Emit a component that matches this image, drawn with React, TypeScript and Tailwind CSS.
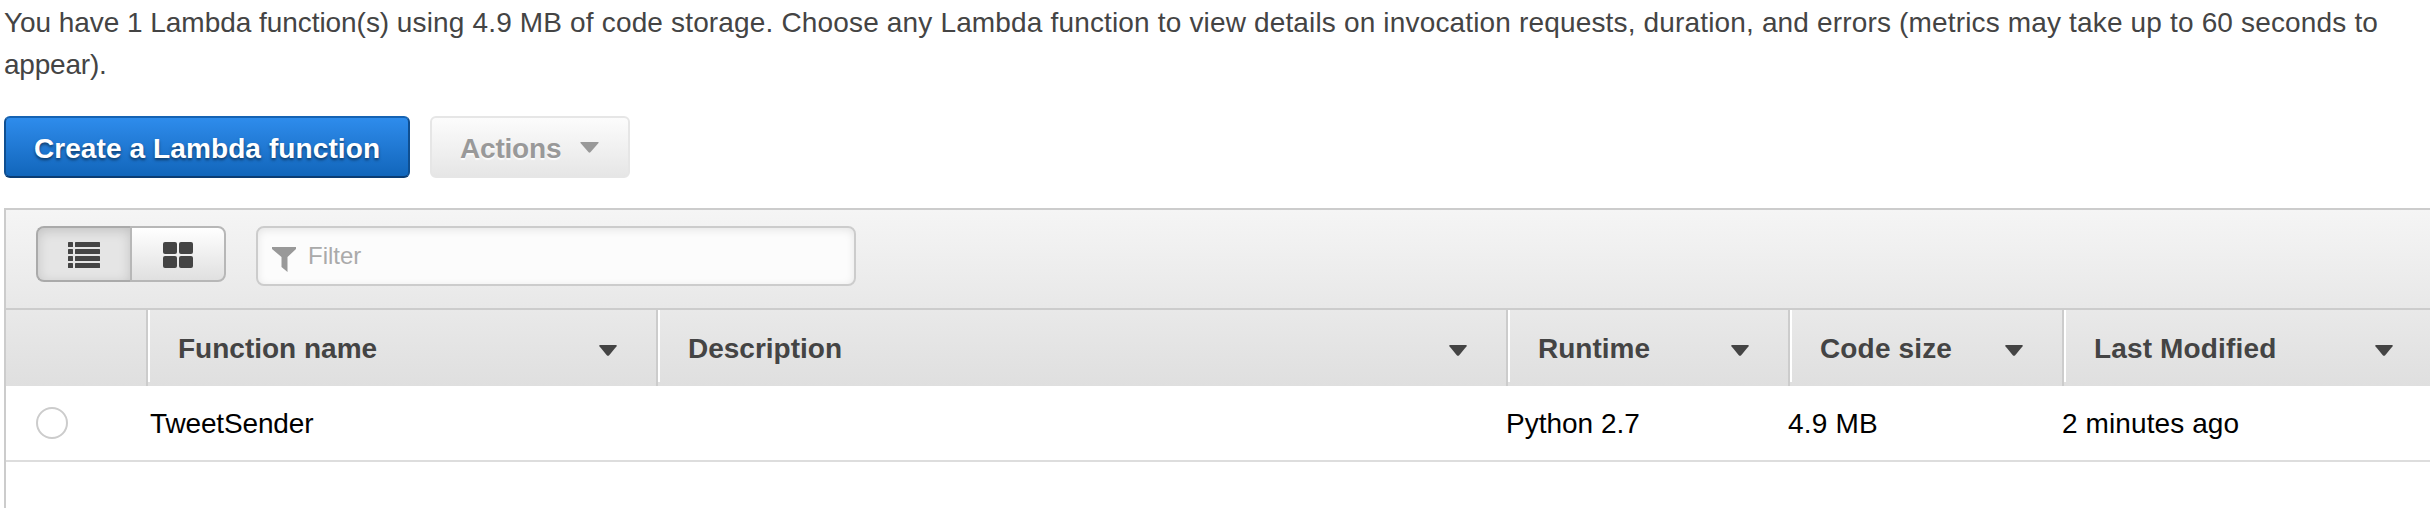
const columns = [
  { name: 'Function name', width: 'w-[510px]', label: '', value: 'TweetSender', cell: 'pl-1 tracking-[-0.15px]' },
  { name: 'Description', width: 'w-[850px]', label: '', value: '', cell: '' },
  { name: 'Runtime', width: 'w-[282px]', label: '', value: 'Python 2.7', cell: '' },
  { name: 'Code size', width: 'w-[274px]', label: 'tracking-[0.15px]', value: '4.9 MB', cell: 'tracking-[0.2px]' },
  { name: 'Last Modified', width: 'w-[370px]', label: 'tracking-[0.15px]', value: '2 minutes ago', cell: 'tracking-[0.1px]' },
];

function Caret() {
  return (
    <svg className="mt-[3px] h-[11px] w-[18px]" viewBox="0 0 18 11" fill="#444">
      <path d="M1 0h16q1.4 0 .6 1.2L10.2 10.2q-1.2 1-2.4 0L.4 1.2Q-.4 0 1 0z" />
    </svg>
  );
}

function ListIcon() {
  const rows = [0, 7, 14, 21];
  return (
    <svg className="h-[26px] w-8" viewBox="0 0 32 26" fill="#444">
      {rows.map((y) => (
        <g key={y}>
          <rect x="0" y={y} width="5" height="5" rx="0.6" />
          <rect x="7" y={y} width="25" height="5" rx="0.6" />
        </g>
      ))}
    </svg>
  );
}

function GridIcon() {
  return (
    <svg className="h-[26px] w-[30px]" viewBox="0 0 30 26" fill="#444">
      <rect x="0" y="0" width="14" height="12" rx="2" />
      <rect x="16" y="0" width="14" height="12" rx="2" />
      <rect x="0" y="14" width="14" height="12" rx="2" />
      <rect x="16" y="14" width="14" height="12" rx="2" />
    </svg>
  );
}

export default function App() {
  return (
    <div className="h-[508px] w-full overflow-hidden bg-white pl-1 font-['Liberation_Sans',Arial,sans-serif] text-[28px] text-[#444]">
      <p className="h-[116px] pt-0.5 leading-[42px]">
        <span className="tracking-[-0.05px] whitespace-nowrap">
          You have 1 Lambda function(s){' '}
          <span className="tracking-[0.16px]">
            using 4.9 MB of code storage. Choose any Lambda function to view details on invocation requests, duration,
            and errors (metrics may take up to 60 seconds to
          </span>
        </span>
        <br />
        <span className="tracking-[-0.2px]">appear).</span>
      </p>

      <div className="flex gap-5">
        <button className="h-[62px] w-[406px] rounded-[6px] border-2 border-[#0f4f91] border-t-[#1563b3] border-b-[#0a3d74] bg-linear-to-b from-[#2e8cec] to-[#1166bb] pt-[3px] font-bold tracking-[0.1px] whitespace-nowrap text-white [text-shadow:0_2px_3px_#00000080]">
          Create a Lambda function
        </button>
        <button className="flex h-[62px] w-[200px] items-center rounded-[6px] border-2 border-[#e6e6e6] bg-linear-to-b from-[#fcfcfc] to-[#e6e6e6] pt-[3px] pl-7 font-bold tracking-[-0.2px] text-[#999] [text-shadow:0_2px_1px_#ffffffcc]">
          Actions
          <svg className="mb-[3px] ml-[19px] h-[11px] w-[19px]" viewBox="0 0 19 11" fill="#999">
            <path d="M1 0h17q1.2 0 .5 1L10.4 10.3q-.9.9-1.8 0L.5 1Q-.2 0 1 0z" />
          </svg>
        </button>
      </div>

      <section className="mt-[30px] h-[310px] border-t-2 border-l-2 border-[#ccc]">
        <div className="flex h-25 items-start border-b-2 border-[#ccc] bg-linear-to-b from-[#f5f5f5] to-[#e8e8e8] pt-4 pl-[30px]">
          <div className="flex h-14 w-[190px]">
            <button className="flex w-[94px] items-center justify-center rounded-l-[8px] border-2 border-r-0 border-[#aaa] bg-[#e5e5e5] pt-0.5 shadow-[inset_0_3px_12px_#00000026]">
              <ListIcon />
            </button>
            <button className="flex w-24 items-center justify-center rounded-r-[8px] border-2 border-[#b7b7b7] bg-linear-to-b from-white to-[#e0e0e0] pt-0.5">
              <GridIcon />
            </button>
          </div>
          <div className="ml-[30px] flex h-15 w-[600px] items-center rounded-[8px] border-2 border-[#ccc] bg-[#fcfcfc] pl-3.5 shadow-[inset_0_2px_8px_#00000018]">
            <svg className="mt-1.5 h-[25px] w-6" viewBox="0 0 24 25" fill="#999">
              <path d="M0 0h24v2L15.5 10v15l-6-5V10L0 2z" />
            </svg>
            <span className="ml-3 text-[24px] text-[#aaa]">Filter</span>
          </div>
        </div>

        <div className="flex h-[76px] bg-linear-to-b from-[#e9e9e9] to-[#dfdfdf] font-bold">
          <div className="w-[140px] shrink-0" />
          {columns.map((c) => (
            <div key={c.name} className={`flex shrink-0 border-l-2 border-[#ccc] ${c.width}`}>
              <div className="h-[72px] w-0.5 bg-white" />
              <div className="flex flex-1 items-center justify-between pt-0.5 pr-[39px] pl-7">
                <span className={c.label}>{c.name}</span>
                <Caret />
              </div>
            </div>
          ))}
        </div>

        <div className="flex h-[76px] items-center border-b-2 border-[#ddd] text-black">
          <div className="w-[140px] shrink-0 pl-[30px]">
            <div className="size-8 rounded-full border-2 border-[#ccc]" />
          </div>
          {columns.map((c) => (
            <div key={c.name} className={`shrink-0 pt-px ${c.width} ${c.cell}`}>
              {c.value}
            </div>
          ))}
        </div>
      </section>
    </div>
  );
}
